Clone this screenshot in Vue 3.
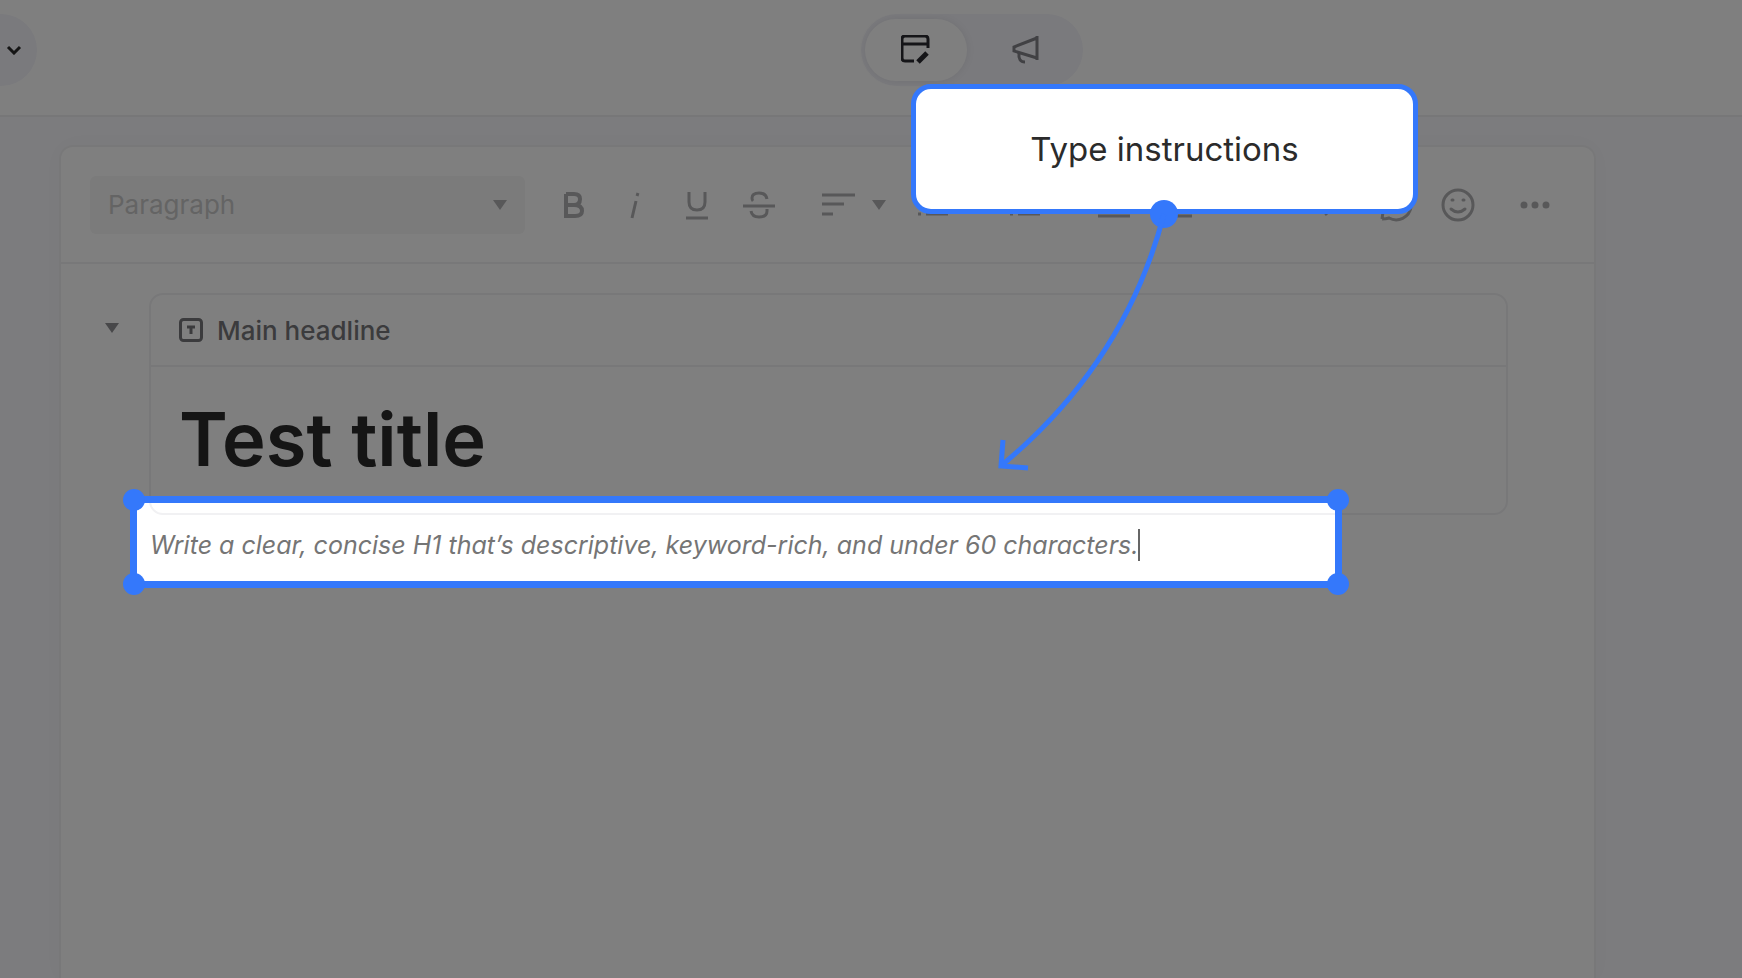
<template>
  <div class="page">
    <header class="topbar">
      <button class="menu-pill" aria-label="Open menu">
        <svg width="16" height="10" viewBox="0 0 16 10" class="line">
          <path d="M2 2l6 6 6-6" stroke-width="3" />
        </svg>
      </button>
      <nav class="switch">
        <button
          v-for="mode in modes"
          :key="mode.key"
          :class="['switch-btn', { active: current === mode.key }]"
          :aria-label="mode.label"
          @click="current = mode.key"
        >
          <svg width="30" height="30" viewBox="0 0 30 30" class="line">
            <path v-for="(p, i) in mode.paths" :key="i" :d="p.d" :stroke-width="p.w" />
          </svg>
        </button>
      </nav>
    </header>

    <main class="editor">
      <div class="toolbar">
        <div class="format">
          <select v-model="format" aria-label="Text style">
            <option>Paragraph</option>
            <option>Heading</option>
          </select>
          <svg class="format-arrow" width="14" height="10" viewBox="0 0 14 10">
            <path d="M0 0h14L7 10z" />
          </svg>
        </div>
        <div v-for="(group, g) in groups" :key="g" class="tool-group">
          <button
            v-for="tool in group"
            :key="tool.label"
            :class="['tool', { dropdown: tool.menu }]"
            :aria-label="tool.label"
          >
            <svg width="36" height="36" viewBox="0 0 36 36" class="line">
              <path
                v-for="(d, i) in tool.paths"
                :key="i"
                :d="d"
                :stroke-width="tool.w || 3"
                :stroke-linecap="tool.cap || 'butt'"
              />
            </svg>
            <svg v-if="tool.menu" class="solid" width="14" height="10" viewBox="0 0 14 10">
              <path d="M0 0h14L7 10z" />
            </svg>
          </button>
        </div>
      </div>

      <div class="content">
        <button class="collapse" aria-label="Collapse section">
          <svg class="solid" width="14" height="10" viewBox="0 0 14 10">
            <path d="M0 0h14L7 10z" />
          </svg>
        </button>
        <section class="column">
          <article class="block">
            <div class="block-head">
              <svg width="24" height="24" viewBox="0 0 24 24" class="line">
                <rect x="1.5" y="1.5" width="21" height="21" rx="3" stroke-width="3" />
                <path d="M8 9h8M12 9v7" stroke-width="3" />
              </svg>
              <span>Main headline</span>
            </div>
            <h1>Test title</h1>
          </article>

          <div class="instruction">
            <input v-model="instruction" aria-label="Instructions" spellcheck="false" />
            <span class="caret"></span>
            <div class="spotlight">
              <i class="handle top left"></i>
              <i class="handle top right"></i>
              <i class="handle bottom left"></i>
              <i class="handle bottom right"></i>
            </div>
          </div>
        </section>
      </div>
    </main>

    <div class="callout">
      <span>Type instructions</span>
      <svg class="arrow" width="190" height="290" viewBox="0 0 190 290">
        <circle cx="174" cy="14" r="14" fill="#3478fb" />
        <path d="M174 14Q135 163 12 265M13 240L11 266L38 268" />
      </svg>
    </div>
  </div>
</template>

<script setup>
import { ref } from 'vue'

const current = ref('edit')
const format = ref('Paragraph')
const instruction = ref('Write a clear, concise H1 that’s descriptive, keyword-rich, and under 60 characters.')

const modes = [
  {
    key: 'edit',
    label: 'Edit content',
    paths: [
      { d: 'M13 26H4Q1 26 1 23V4Q1 1 4 1H24Q27 1 27 4V13M1 9H27', w: 3 },
      { d: 'M17 27L26 18', w: 5 }
    ]
  },
  {
    key: 'promote',
    label: 'Promote',
    paths: [
      { d: 'M27 1V25M27 3L4 12V16L27 23', w: 3 },
      { d: 'M9 18Q8 27 15 27', w: 3 }
    ]
  }
]

const groups = [
  [
    { label: 'Bold', w: 4, paths: ['M11 7H19Q25 7 25 12Q25 18 19 18H11M19 18Q27 18 27 24Q27 29 20 29H11V7'] },
    { label: 'Italic', w: 3, paths: ['M19 14L15 31M21 6L20 9'] },
    { label: 'Underline', paths: ['M10 5V15Q10 23 18 23Q26 23 26 15V5M7 31H29'] },
    { label: 'Strikethrough', paths: ['M2 19H34M26 12Q25 6 18 6Q11 6 11 11Q11 13 12 14M10 24Q11 30 18 30Q26 30 26 24Q26 23 26 22'] }
  ],
  [
    { label: 'Align', menu: true, paths: ['M2 8H35M2 17H24M2 27H13'] },
    { label: 'Bullet list', menu: true, paths: ['M6 8H9M14 8H36M6 17H9M14 17H36M6 27H9M14 27H36'] },
    { label: 'Numbered list', menu: true, paths: ['M6 6V11M14 8H36M14 17H36M6 27H9M14 27H36'] },
    { label: 'Outdent', paths: ['M2 7H34M16 14H34M16 21H34M2 29H34'] },
    { label: 'Indent', paths: ['M2 7H34M16 14H34M16 21H34M2 29H34'] }
  ],
  [
    { label: 'Link', paths: ['M15 13H9A5 5 0 0 0 9 23H15M21 13H27A5 5 0 0 1 27 23H21M12 18H24'] },
    { label: 'Find', paths: ['M8 14A8 8 0 1 0 24 14A8 8 0 1 0 8 14M22 20L28 28'] }
  ],
  [
    { label: 'Comment', paths: ['M4 32L5 25A15 15 0 1 1 11 31Q8 32 4 32'] },
    {
      label: 'Emoji',
      cap: 'round',
      paths: ['M3 18A15 15 0 1 0 33 18A15 15 0 1 0 3 18M11 22Q18 28 25 22M12 13H13M23 13H24']
    }
  ],
  [{ label: 'More', w: 7, cap: 'round', paths: ['M5 18h0M16 18h0M27 18h0'] }]
]
</script>

<style>
body {
  margin: 0;
}
</style>

<style scoped>
.page {
  position: relative;
  display: flex;
  flex-direction: column;
  min-height: 100vh;
  overflow: hidden;
  background: #f8f8fc;
  color: #2b2b2b;
  font-family: Inter, "Liberation Sans", sans-serif;
}

button {
  display: flex;
  align-items: center;
  justify-content: center;
  padding: 0;
  border: 0;
  background: none;
  color: inherit;
  cursor: pointer;
}

.line {
  fill: none;
  stroke: currentColor;
}

.solid {
  fill: currentColor;
}

.topbar {
  display: flex;
  align-items: flex-start;
  justify-content: center;
  box-sizing: border-box;
  height: 117px;
  padding: 14px 0;
  border-bottom: 2px solid #eeeef1;
  background: #fff;
}

.menu-pill {
  position: absolute;
  left: -36px;
  width: 73px;
  height: 72px;
  padding-left: 26px;
  border-radius: 36px;
  background: #f4f4fa;
}

.switch {
  display: flex;
  gap: 7px;
  margin-left: 202px;
  padding: 5px 7px 5px 4px;
  border-radius: 36px;
  background: #f4f4fa;
}

.switch-btn {
  width: 102px;
  height: 62px;
  border-radius: 31px;
  color: #828288;
}

.switch-btn.active {
  background: #fff;
  color: #2b2b30;
  box-shadow: 0 0 8px rgba(0, 0, 0, 0.08);
}

.editor {
  flex: 1;
  margin: 28px 146px 0 59px;
  border: 2px solid #f1f1f3;
  border-bottom: 0;
  border-radius: 14px 14px 0 0;
  background: #fff;
  box-shadow: 0 0 24px rgba(0, 0, 0, 0.02);
}

.toolbar {
  display: flex;
  align-items: center;
  gap: 17px;
  height: 115px;
  padding-left: 29px;
  border-bottom: 2px solid #f1f1f3;
}

.format {
  position: relative;
  flex: 0 0 435px;
}

.format select {
  width: 100%;
  height: 58px;
  padding: 0 18px;
  appearance: none;
  border: 0;
  border-radius: 6px;
  background: #f7f7f7;
  color: #c8c8c8;
  font-family: inherit;
  font-size: 26px;
}

.format-arrow {
  position: absolute;
  top: 24px;
  right: 18px;
  fill: #b0b0b2;
  pointer-events: none;
}

.tool-group {
  display: flex;
  color: #b0b0b3;
}

.tool {
  width: 62px;
  height: 58px;
}

.tool.dropdown {
  gap: 16px;
  width: 92px;
}

.content {
  display: flex;
  padding: 29px 86px 0 38px;
}

.collapse {
  width: 26px;
  height: 70px;
  margin-right: 24px;
  color: #909094;
}

.column {
  flex: 1;
}

.block {
  border: 2px solid #f1f1f3;
  border-radius: 14px;
}

.block-head {
  display: flex;
  align-items: center;
  gap: 14px;
  height: 70px;
  padding-left: 28px;
  border-bottom: 2px solid #f1f1f3;
  color: #77777a;
  font-size: 26px;
  font-weight: 500;
}

h1 {
  margin: 0;
  padding: 28px 28px 30px;
  font-size: 74px;
  font-weight: 600;
  line-height: 88px;
}

.instruction {
  position: relative;
  display: flex;
  align-items: center;
  height: 60px;
  padding-left: 1px;
}

.instruction input {
  field-sizing: content;
  padding: 0;
  border: 0;
  outline: 0;
  background: none;
  color: #757575;
  font-family: inherit;
  font-size: 25px;
  font-style: italic;
}

.caret {
  width: 2px;
  height: 32px;
  background: #666;
}

/* the huge shadow dims everything outside the frame */
.spotlight {
  position: absolute;
  top: -19px;
  right: 166px;
  bottom: -13px;
  left: -19px;
  border: 7px solid #3478fb;
  box-shadow: 0 0 0 2000px rgba(0, 0, 0, 0.5);
  pointer-events: none;
}

.handle {
  position: absolute;
  width: 22px;
  height: 22px;
  border-radius: 50%;
  background: #3478fb;
}

.handle.top {
  top: -14px;
}

.handle.bottom {
  bottom: -14px;
}

.handle.left {
  left: -14px;
}

.handle.right {
  right: -14px;
}

.callout {
  position: absolute;
  top: 84px;
  left: 911px;
  display: flex;
  align-items: center;
  justify-content: center;
  box-sizing: border-box;
  width: 507px;
  height: 130px;
  border: 5px solid #3478fb;
  border-radius: 20px;
  background: #fff;
  font-size: 33px;
}

.arrow {
  position: absolute;
  top: 111px;
  left: 74px;
}

.arrow path {
  fill: none;
  stroke: #3478fb;
  stroke-width: 5;
}
</style>
